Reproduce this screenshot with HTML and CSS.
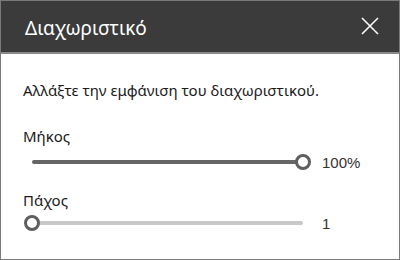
FILE: index.html
```html
<!DOCTYPE html>
<html lang="el">
  <head>
    <meta charset="UTF-8" />
    <title>Διαχωριστικό</title>
    <link rel="stylesheet" href="styles.css">
  </head>
  <body>
    <div class="panel">
      <div class="panel-header">
        <span class="panel-title">Διαχωριστικό</span>
        <button class="close-btn" type="button" aria-label="Κλείσιμο">
          <svg width="18" height="18" viewBox="0 0 18 18">
            <path d="M1 1 L17 17 M17 1 L1 17" stroke="#fff" stroke-width="1.6" fill="none" />
          </svg>
        </button>
      </div>

      <div class="panel-body">
        <p class="intro">Αλλάξτε την εμφάνιση του διαχωριστικού.</p>

        <div class="field">
          <label class="field-label">Μήκος</label>
          <div class="slider-row">
            <div class="slider">
              <div class="track track-full"></div>
              <div class="thumb" style="left: 100%"></div>
            </div>
            <span class="slider-value">100%</span>
          </div>
        </div>

        <div class="field">
          <label class="field-label">Πάχος</label>
          <div class="slider-row">
            <div class="slider">
              <div class="track track-empty"></div>
              <div class="thumb" style="left: 0%"></div>
            </div>
            <span class="slider-value">1</span>
          </div>
        </div>
      </div>
    </div>
  </body>
</html>
```

FILE: styles.css
```css
html, body {
  margin: 0;
  padding: 0;
}

body {
  width: 400px;
  height: 260px;
  font-family: "Noto Sans", "Open Sans", sans-serif;
  background: #fff;
}

.panel {
  width: 400px;
  height: 260px;
  box-sizing: border-box;
  border: 1px solid #7a7a7a;
  display: flex;
  flex-direction: column;
}

.panel-header {
  height: 51px;
  flex-shrink: 0;
  background: #3b3b3b;
  border-bottom: 2px solid #8a8a8a;
  display: flex;
  align-items: center;
  justify-content: space-between;
  padding: 0 20px 0 24px;
}

.panel-title {
  color: #fff;
  font-size: 19px;
  margin-top: 2px;
}

.close-btn {
  background: none;
  border: none;
  padding: 0;
  width: 18px;
  height: 18px;
  display: flex;
  margin-top: -2px;
}

.panel-body {
  padding: 0 0 0 22px;
}

.intro {
  margin: 26px 0 0 0;
  font-size: 15px;
  line-height: 20px;
  color: #1a1a1a;
}

.field {
  display: flex;
  flex-direction: column;
}

.field-label {
  font-size: 15px;
  line-height: 20px;
  color: #1a1a1a;
  margin-top: 26px;
}

.field + .field .field-label {
  margin-top: 18px;
}

.slider-row {
  display: flex;
  align-items: center;
  height: 20px;
  margin-top: 6px;
}

.field + .field .slider-row {
  margin-top: 3px;
}

.slider {
  position: relative;
  width: 271px;
  height: 16px;
  margin-left: 9px;
}

.track {
  position: absolute;
  left: 0;
  right: 0;
  top: 6px;
  height: 4px;
  border-radius: 2px;
}

.track-full {
  background: #666;
}

.track-empty {
  background: #c8c8c8;
}

.thumb {
  position: absolute;
  top: 0;
  width: 16px;
  height: 16px;
  margin-left: -8px;
  box-sizing: border-box;
  border: 3px solid #5f5f5f;
  border-radius: 50%;
  background: #fff;
}

.slider-value {
  font-family: "Liberation Sans", Arial, sans-serif;
  font-size: 15px;
  color: #333;
  margin-left: 19px;
}
```
